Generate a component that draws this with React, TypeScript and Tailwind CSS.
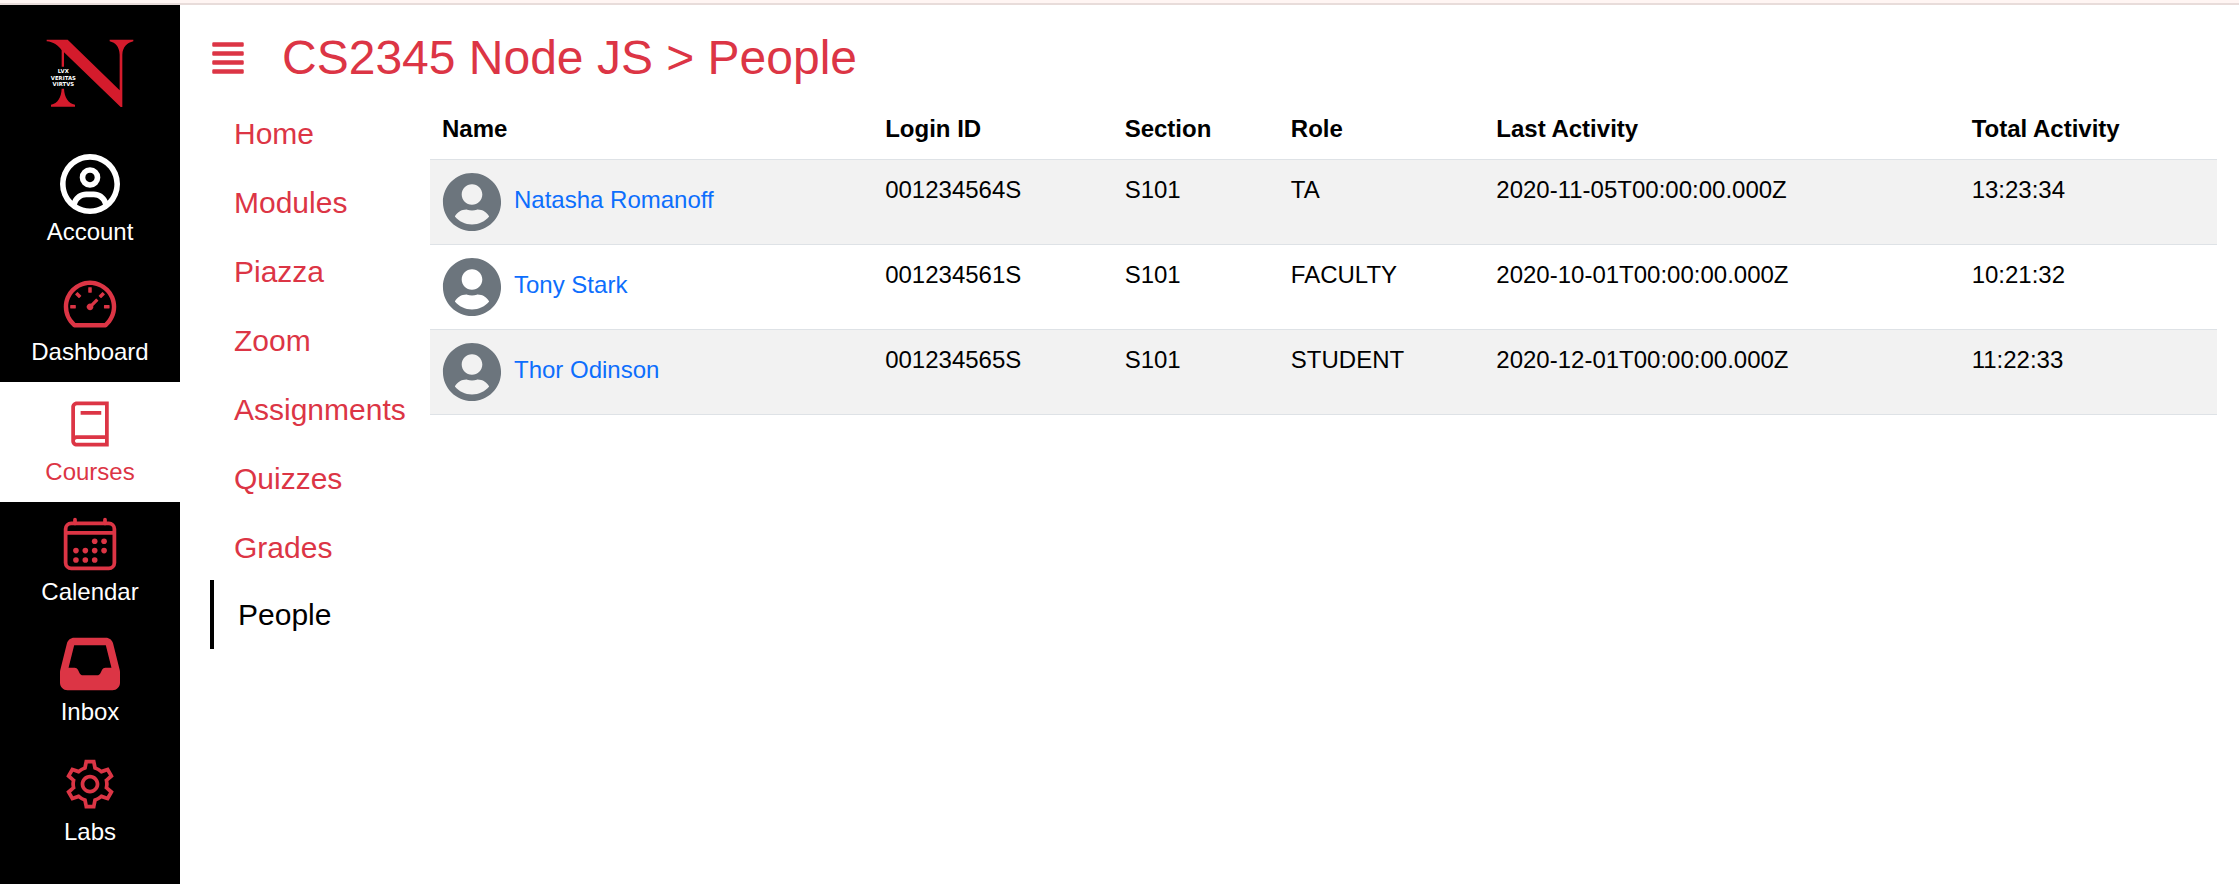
import type { IconType } from "react-icons";
import { AiOutlineDashboard } from "react-icons/ai";
import { FaAlignJustify, FaUserCircle } from "react-icons/fa";
import { FaInbox, FaRegCircleUser } from "react-icons/fa6";
import { IoCalendarOutline } from "react-icons/io5";
import { LiaBookSolid, LiaCogSolid } from "react-icons/lia";

type NavItem = { label: string; icon: IconType; tone: string };

const navItems: NavItem[] = [
  { label: "Account", icon: FaRegCircleUser, tone: "text-white" },
  { label: "Dashboard", icon: AiOutlineDashboard, tone: "text-[#dc3545]" },
  { label: "Courses", icon: LiaBookSolid, tone: "text-[#dc3545]" },
  { label: "Calendar", icon: IoCalendarOutline, tone: "text-[#dc3545]" },
  { label: "Inbox", icon: FaInbox, tone: "text-[#dc3545]" },
  { label: "Labs", icon: LiaCogSolid, tone: "text-[#dc3545]" },
];

const courseLinks = [
  "Home",
  "Modules",
  "Piazza",
  "Zoom",
  "Assignments",
  "Quizzes",
  "Grades",
  "People",
];

const columns = [
  { label: "Name", width: "w-[24.8%]" },
  { label: "Login ID", width: "w-[13.4%]" },
  { label: "Section", width: "w-[9.3%]" },
  { label: "Role", width: "w-[11.5%]" },
  { label: "Last Activity", width: "w-[26.6%]" },
  { label: "Total Activity", width: "w-[14.4%]" },
];

const people = [
  {
    name: "Natasha Romanoff",
    loginId: "001234564S",
    section: "S101",
    role: "TA",
    lastActivity: "2020-11-05T00:00:00.000Z",
    totalActivity: "13:23:34",
  },
  {
    name: "Tony Stark",
    loginId: "001234561S",
    section: "S101",
    role: "FACULTY",
    lastActivity: "2020-10-01T00:00:00.000Z",
    totalActivity: "10:21:32",
  },
  {
    name: "Thor Odinson",
    loginId: "001234565S",
    section: "S101",
    role: "STUDENT",
    lastActivity: "2020-12-01T00:00:00.000Z",
    totalActivity: "11:22:33",
  },
];

function Logo() {
  return (
    <svg viewBox="138 118 264 206" className="w-[88px]" aria-hidden="true">
      <g fill="#d41b2c">
        <path d="M140 120H203L359 272V165C358 142 347 129 329 125V120H400V125C382 129 368 142 367 165V322H362L192 158V201H185V152C174 136 160 127 140 125Z" />
        <path d="M185 267H192C193 293 205 311 225 315V321H153V315C173 311 184 293 185 267Z" />
      </g>
      <g
        fill="#ffffff"
        fontFamily="DejaVu Sans, sans-serif"
        fontWeight="700"
        fontSize="16"
        textAnchor="middle"
      >
        <text x="190" y="219">LVX</text>
        <text x="190" y="241">VERITAS</text>
        <text x="190" y="260">VIRTVS</text>
      </g>
    </svg>
  );
}

function MainNav() {
  return (
    <nav className="w-[180px] shrink-0 bg-black">
      <a href="#northeastern" className="flex h-[137px] items-center justify-center" aria-label="Northeastern">
        <Logo />
      </a>
      {navItems.map(({ label, icon: Icon, tone }) => {
        const active = label === "Courses";
        return (
          <a
            key={label}
            href={"#" + label.toLowerCase()}
            className={
              active
                ? "flex flex-col items-center bg-white py-3 text-[#dc3545]"
                : "flex flex-col items-center bg-black py-3 text-white"
            }
          >
            <Icon className={"size-[60px] " + tone} />
            {label}
          </a>
        );
      })}
    </nav>
  );
}

function CourseNav() {
  return (
    <nav className="flex w-[220px] shrink-0 flex-col text-[30px] leading-[45px]">
      {courseLinks.map((label) => (
        <a
          key={label}
          href={"#" + label.toLowerCase()}
          className={
            label === "People"
              ? "-mt-0.5 border-l-4 border-black px-6 py-3 text-black"
              : "px-6 py-3 text-[#dc3545]"
          }
        >
          {label}
        </a>
      ))}
    </nav>
  );
}

function PeopleTable() {
  return (
    <table className="min-w-0 flex-1 table-fixed border-collapse text-left">
      <thead>
        <tr className="border-b border-[#dee2e6]">
          {columns.map((column) => (
            <th key={column.label} scope="col" className={"p-3 font-bold " + column.width}>
              {column.label}
            </th>
          ))}
        </tr>
      </thead>
      <tbody>
        {people.map((person) => (
          <tr key={person.loginId} className="border-b border-[#dee2e6] align-top odd:bg-[#f2f2f2]">
            <td className="p-3 whitespace-nowrap">
              <a href="#person" className="text-[#0d6efd]">
                <FaUserCircle className="mr-3 inline size-[60px] align-middle text-[#6c757d]" />
                {person.name}
              </a>
            </td>
            <td className="p-3">{person.loginId}</td>
            <td className="p-3">{person.section}</td>
            <td className="p-3">{person.role}</td>
            <td className="p-3">{person.lastActivity}</td>
            <td className="p-3">{person.totalActivity}</td>
          </tr>
        ))}
      </tbody>
    </table>
  );
}

export default function App() {
  return (
    <div className="flex min-h-screen flex-col bg-white font-['Liberation_Sans',Arial,sans-serif] text-[24px] leading-[36px] text-black">
      <div className="h-[5px] border-b-2 border-[#e8dcda] bg-[#fff5f3]" />
      <div className="flex flex-1">
        <MainNav />
        <main className="min-w-0 flex-1 pt-6 pr-[22px] pl-[30px]">
          <header className="mb-3 flex items-center gap-9 text-[#dc3545]">
            <button type="button" aria-label="Toggle course navigation">
              <FaAlignJustify className="size-9" />
            </button>
            <h2 className="text-[48px] leading-[58px]">CS2345 Node JS &gt; People</h2>
          </header>
          <div className="flex items-start">
            <CourseNav />
            <PeopleTable />
          </div>
        </main>
      </div>
    </div>
  );
}
